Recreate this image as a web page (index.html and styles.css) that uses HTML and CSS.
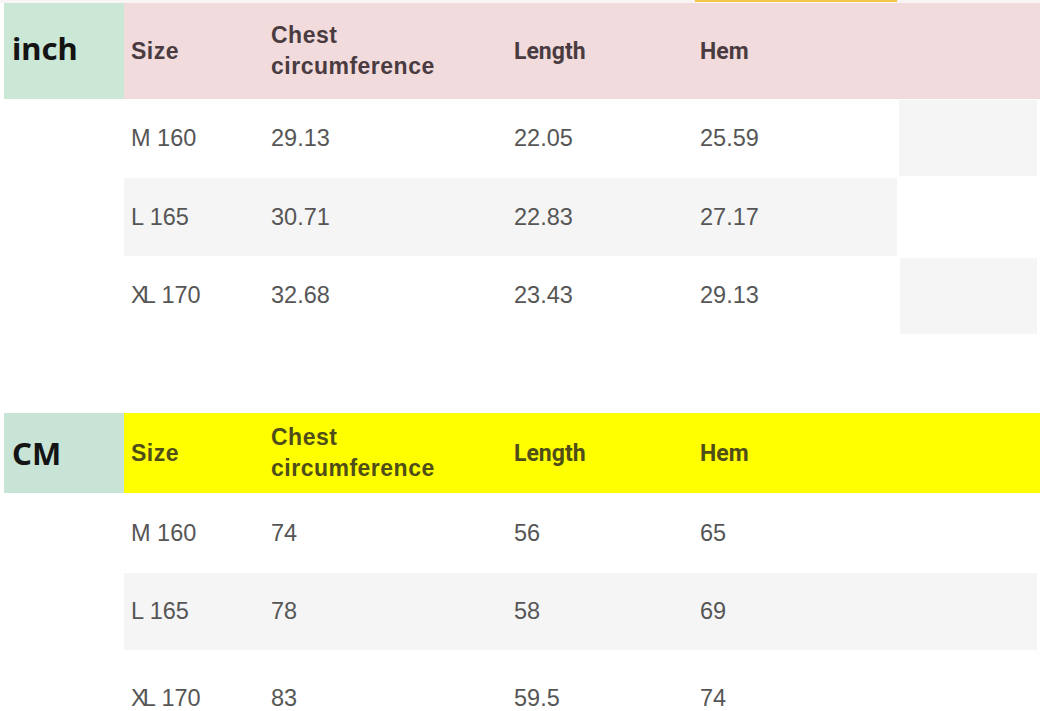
FILE: index.html
```html
<!DOCTYPE html>
<html>
<head>
<meta charset="utf-8">
<link rel="stylesheet" href="styles.css">
</head>
<body>
<div class="topstrip"><div class="topmark"></div></div>

<section class="table inch">
  <div class="row head">
    <div class="unit">inch</div>
    <div class="hc arial">Size</div>
    <div class="hc arial two">Chest<br>circumference</div>
    <div class="hc roboto">Length</div>
    <div class="hc roboto">Hem</div>
    <div class="hc"></div>
  </div>
  <div class="row body r1">
    <div></div>
    <div class="c">M 160</div>
    <div class="c">29.13</div>
    <div class="c">22.05</div>
    <div class="c">25.59</div>
    <div class="x gray"></div>
  </div>
  <div class="row body r2">
    <div></div>
    <div class="c gray">L 165</div>
    <div class="c gray">30.71</div>
    <div class="c gray">22.83</div>
    <div class="c gray">27.17</div>
    <div class="x"></div>
  </div>
  <div class="row body r2">
    <div></div>
    <div class="c"><span class="xl">X</span>L 170</div>
    <div class="c">32.68</div>
    <div class="c">23.43</div>
    <div class="c">29.13</div>
    <div class="x gray"></div>
  </div>
</section>

<section class="table cm">
  <div class="row head">
    <div class="unit">CM</div>
    <div class="hc arial">Size</div>
    <div class="hc arial two">Chest<br>circumference</div>
    <div class="hc roboto">Length</div>
    <div class="hc roboto">Hem</div>
    <div class="hc"></div>
  </div>
  <div class="row body r0">
    <div></div>
    <div class="c">M 160</div>
    <div class="c">74</div>
    <div class="c">56</div>
    <div class="c">65</div>
    <div class="c"></div>
  </div>
  <div class="row body r3">
    <div></div>
    <div class="c gray">L 165</div>
    <div class="c gray">78</div>
    <div class="c gray">58</div>
    <div class="c gray">69</div>
    <div class="c gray end"></div>
  </div>
  <div class="row body r4">
    <div></div>
    <div class="c"><span class="xl">X</span>L 170</div>
    <div class="c">83</div>
    <div class="c">59.5</div>
    <div class="c">74</div>
    <div class="c"></div>
  </div>
</section>
</body>
</html>
```

FILE: styles.css
```css
html, body {
  margin: 0;
  padding: 0;
  background: #ffffff;
  width: 1040px;
  height: 711px;
  overflow: hidden;
}

body {
  font-family: "Liberation Sans", Arial, sans-serif;
}

.topstrip {
  height: 3px;
  background: #f7f5f5;
  display: flex;
}

.topmark {
  margin-left: 695px;
  width: 202px;
  height: 2px;
  background: #f3c64a;
}

.row {
  display: grid;
  grid-template-columns: 120px 140px 243px 186px 204px 1fr;
  margin-left: 4px;
}

.inch .head { height: 96px; }
.cm .head { height: 80px; }

.cm { margin-top: 79px; }

.r0 { height: 80px; }
.r1 { height: 79px; }
.r2 { height: 78px; }
.r3 { height: 77px; }
.r4 { height: 96px; }

.unit {
  display: flex;
  align-items: center;
  padding-left: 8px;
  font-family: "Noto Sans", sans-serif;
  font-weight: 700;
  font-size: 31px;
  color: #141414;
}

.inch .unit { background: #cbe7d5; padding-bottom: 6px; }
.cm .unit { background: #c8e4d6; padding-top: 0; }

.hc {
  display: flex;
  align-items: center;
  padding-left: 7px;
  font-weight: 700;
  font-size: 23px;
}

.inch .hc { background: #f1dbdc; color: #4a3b41; }
.cm .hc { background: #ffff00; color: #4f4d18; }

.arial { font-family: "Liberation Sans", Arial, sans-serif; letter-spacing: 0.5px; }
.roboto { font-family: Roboto, sans-serif; font-size: 23px; }

.two { line-height: 31px; }

.c {
  display: flex;
  align-items: center;
  padding-left: 7px;
  font-size: 23.5px;
  color: #565656;
  white-space: pre;
}

.xl { letter-spacing: -4px; }

.gray { background: #f5f5f5; }

.x { margin: 1px 3px 2px 2px; }
.r2 .x { margin: 2px 3px 0 3px; }

.end { margin-right: 3px; }
```
